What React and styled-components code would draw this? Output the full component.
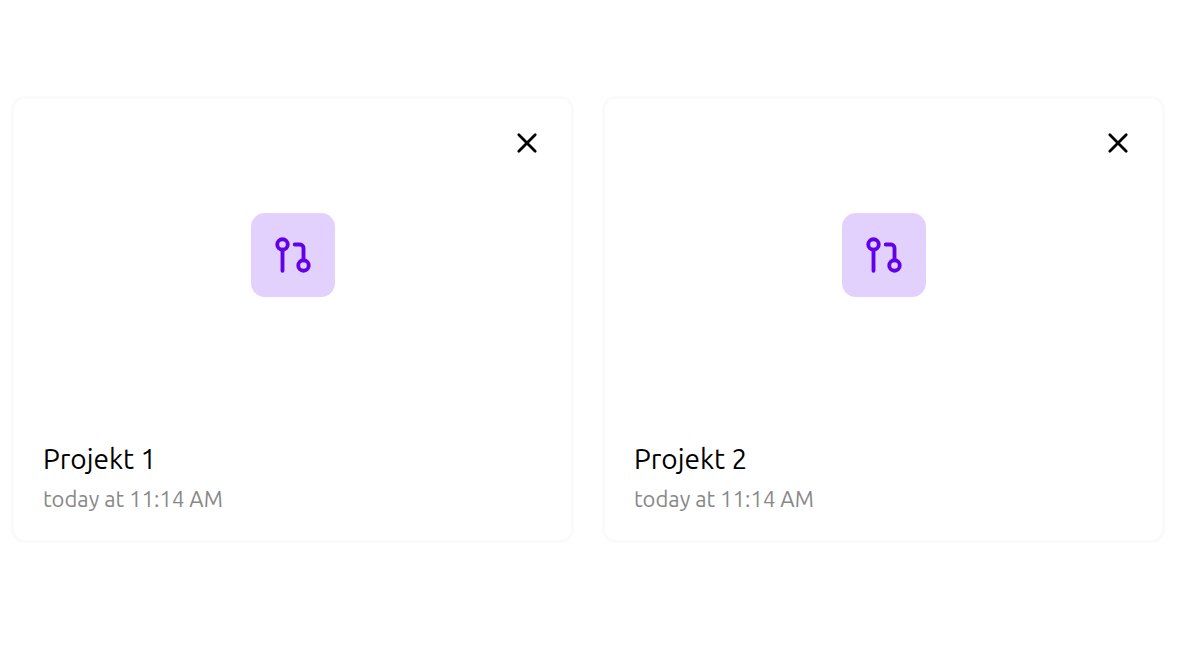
import React, { useState } from "react";
import styled, { createGlobalStyle } from "styled-components";

const GlobalStyle = createGlobalStyle`
  *, *::before, *::after {
    box-sizing: border-box;
  }

  body {
    margin: 0;
    background: #ffffff;
    color: #000000;
    font-family: Ubuntu, "Noto Sans", "Open Sans", sans-serif;
  }
`;

const ProjectGrid = styled.main`
  display: grid;
  grid-template-columns: repeat(2, minmax(0, 1fr));
  gap: 28px;
  padding: 96px 15px 28px 11px;
`;

const Card = styled.article`
  display: flex;
  flex-direction: column;
  padding: 28px 28px 28px 29px;
  border: 3px solid #fafafa;
  border-radius: 14px;
  background: #ffffff;
`;

const CloseButton = styled.button`
  display: flex;
  align-self: flex-end;
  padding: 0;
  border: 0;
  background: none;
  color: inherit;
  cursor: pointer;
`;

const IconTile = styled.div`
  display: flex;
  align-self: center;
  margin: 54px 0 140px;
  padding: 21px;
  border-radius: 14px;
  background: #e2d1fd;
  color: #6200ea;
`;

const Title = styled.h2`
  margin: 0;
  font-size: 28px;
  font-weight: 400;
  line-height: 44px;
`;

const Timestamp = styled.p`
  margin: 5px 0 0;
  color: #888888;
  font-size: 22px;
  line-height: 26px;
`;

const CloseIcon = () => (
  <svg width="32" height="32" viewBox="0 0 32 32" fill="none" stroke="currentColor" strokeWidth="2.8" strokeLinecap="round" aria-hidden="true">
    <path d="M7.8 7.8 24.2 24.2M24.2 7.8 7.8 24.2" />
  </svg>
);

const PullRequestIcon = () => (
  <svg width="42" height="42" viewBox="0 0 24 24" fill="none" stroke="currentColor" strokeWidth="2.2" strokeLinecap="round" strokeLinejoin="round" aria-hidden="true">
    <circle cx="18" cy="18" r="3" />
    <circle cx="6" cy="6" r="3" />
    <path d="M13 6h3a2 2 0 0 1 2 2v7" />
    <path d="M6 9v12" />
  </svg>
);

const initialProjects = [
  { id: 1, name: "Projekt 1", edited: "today at 11:14 AM" },
  { id: 2, name: "Projekt 2", edited: "today at 11:14 AM" },
];

function ProjectCard({ project, onClose }) {
  return (
    <Card>
      <CloseButton type="button" aria-label={`Close ${project.name}`} onClick={onClose}>
        <CloseIcon />
      </CloseButton>
      <IconTile>
        <PullRequestIcon />
      </IconTile>
      <Title>{project.name}</Title>
      <Timestamp>{project.edited}</Timestamp>
    </Card>
  );
}

export default function App() {
  const [projects, setProjects] = useState(initialProjects);
  const close = (id) => setProjects((list) => list.filter((p) => p.id !== id));

  return (
    <>
      <GlobalStyle />
      <ProjectGrid>
        {projects.map((project) => (
          <ProjectCard key={project.id} project={project} onClose={() => close(project.id)} />
        ))}
      </ProjectGrid>
    </>
  );
}
